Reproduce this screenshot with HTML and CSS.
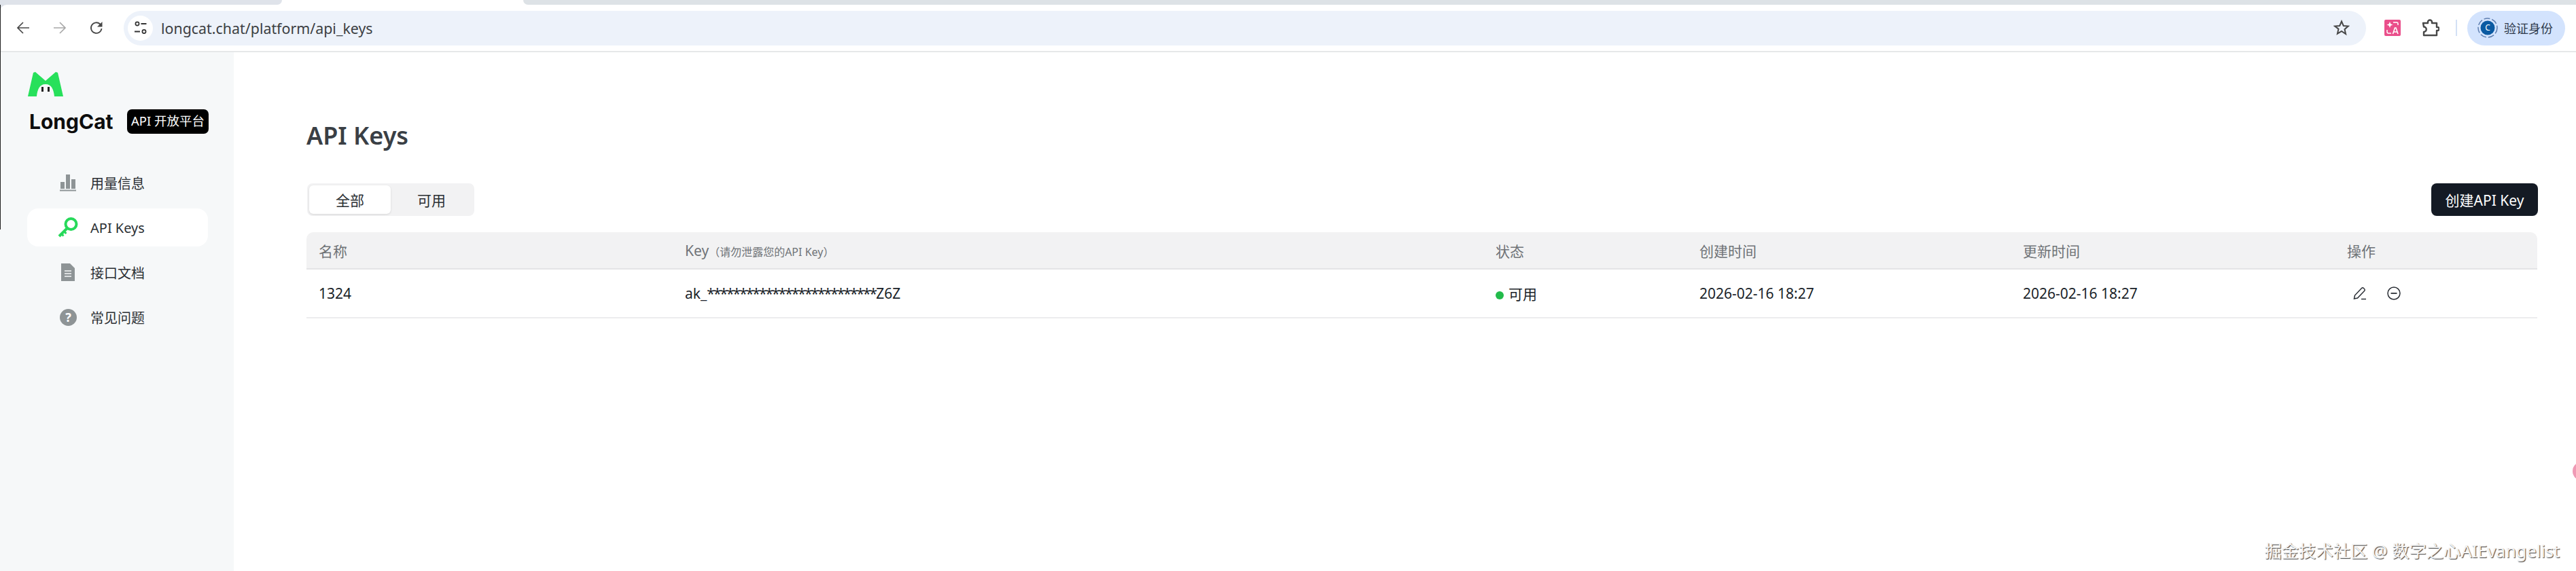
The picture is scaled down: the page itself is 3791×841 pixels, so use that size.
FILE: index.html
```html
<!DOCTYPE html>
<html lang="zh-CN">

<head>
    <meta charset="UTF-8">
    <title>API Keys</title>
    <link rel="stylesheet" href="styles.css">
</head>

<body>
    <div class="chrome">
        <!-- 顶部标签条 -->
        <div class="tabstrip">
            <div class="tab_left"></div>
            <div class="tab_active"></div>
            <div class="tab_right"></div>
        </div>

        <!-- 浏览器工具栏 -->
        <header class="toolbar">
            <div class="nav_btns">
                <svg class="nav_icon" viewBox="0 0 20 20"><path d="M19 10H2M10 2l-8 8 8 8" fill="none" stroke="#474747" stroke-width="1.7"/></svg>
                <svg class="nav_icon" viewBox="0 0 20 20"><path d="M1 10h17M10 2l8 8-8 8" fill="none" stroke="#a8a8a8" stroke-width="1.7"/></svg>
                <svg class="nav_icon" viewBox="0 0 20 20"><path d="M17.500 11a7.800 7.800 0 1 1-2.300-6.500L17.500 7" fill="none" stroke="#474747" stroke-width="1.800"/><path d="M18.500 1v7.500H11z" fill="#474747"/></svg>
            </div>
            <div class="omnibox">
                <span class="site_btn">
                    <svg width="20" height="20" viewBox="0 0 20 20"><circle cx="5" cy="4" r="2.600" fill="none" stroke="#333" stroke-width="1.700"/><path d="M10.500 4h8M1 15.500h8" stroke="#333" stroke-width="2"/><circle cx="15" cy="15.500" r="2.600" fill="none" stroke="#333" stroke-width="1.700"/></svg>
                </span>
                <span class="url">longcat.chat/platform/api_keys</span>
                <svg class="star" viewBox="0 0 24 24"><path d="M12 2.500l2.800 6.500 7 .6-5.300 4.600 1.600 6.900L12 17l-6.100 3.600 1.600-6.900L2.200 9.600l7-.6z" fill="none" stroke="#474747" stroke-width="2"/></svg>
            </div>
            <span class="ext_translate">
                <svg width="24" height="24" viewBox="0 0 24 24"><rect width="24" height="24" rx="2" fill="#ea4f8b"/><path d="M8 3l1.300 3.200L12.500 7.500 9.300 8.800 8 12 6.700 8.800 3.500 7.500l3.200-1.300z" fill="#fff"/><path d="M13 4h5a2 2 0 0 1 2 2v2M4 15v3a2 2 0 0 0 2 2h4" fill="none" stroke="#fff" stroke-width="1.500"/><path d="M12.500 21l3-9h1.500l3 9M13.800 18h5" fill="none" stroke="#fff" stroke-width="1.600"/></svg>
            </span>
            <svg class="ext_puzzle" viewBox="0 0 26 26"><path d="M2 6h7V4.500a3 3 0 0 1 6 0V6h7v6h1a2.500 2.500 0 0 1 0 5h-1v7H3v-5a3.500 3.500 0 0 0 0-7.500z" fill="none" stroke="#474747" stroke-width="2.400" stroke-linejoin="round"/></svg>
            <span class="divider"></span>
            <div class="profile">
                <span class="avatar">
                    <svg width="30" height="30" viewBox="0 0 30 30"><circle cx="15" cy="15" r="14" fill="none" stroke="#5f7fb0" stroke-width="1.500" stroke-dasharray="9 3"/><circle cx="15" cy="15" r="10.500" fill="#0b5aa2"/><text x="15" y="19" class="avatar_text">C</text></svg>
                </span>
                <span class="profile_text">验证身份</span>
            </div>
        </header>
    </div>

    <div class="app">
        <!-- 左侧导航栏 -->
        <aside class="sidebar">
            <svg class="logo" viewBox="0 0 52 36">
                <path d="M8 1l3-1 15 13L41 0l3 1 8 35H39c-1-10-4-18-13-18s-12 8-13 18H0z" fill="#27e05b"/>
                <path d="M20 22h3v7h-3zM29 22h3v7h-3z" fill="#222"/>
            </svg>
            <div class="brand">
                <span class="brand_name">LongCat</span>
                <span class="brand_tag">API 开放平台</span>
            </div>
            <ul class="menu">
                <li class="menu_item">
                    <span class="menu_icon">
                        <svg width="24" height="25" viewBox="0 0 24 25"><path d="M1 11h6v10H1zM9 0h6v21H9zM17 7h6v14h-6z" fill="#8e9496"/><path d="M0 23.500h24" stroke="#8e9496" stroke-width="2"/></svg>
                    </span>
                    <span>用量信息</span>
                </li>
                <li class="menu_item menu_item_active">
                    <span class="menu_icon">
                        <svg width="30" height="30" viewBox="0 0 30 30"><circle cx="19.500" cy="10" r="8" fill="none" stroke="#27d95a" stroke-width="4"/><path d="M14 16L2 28" stroke="#27d95a" stroke-width="4"/><path d="M5 24l3.500 3.500M9 20.500l3.500 3.500" stroke="#27d95a" stroke-width="3"/></svg>
                    </span>
                    <span>API Keys</span>
                </li>
                <li class="menu_item">
                    <span class="menu_icon">
                        <svg width="20" height="26" viewBox="0 0 20 26"><path d="M0 0h13l7 7v19H0z" fill="#8e9496"/><path d="M5 11h10M5 15h10M5 19h10" stroke="#f6f8f9" stroke-width="1.500"/></svg>
                    </span>
                    <span>接口文档</span>
                </li>
                <li class="menu_item">
                    <span class="menu_icon">
                        <svg width="25" height="25" viewBox="0 0 25 25"><circle cx="12.500" cy="12.500" r="12.500" fill="#8e9496"/><text x="12.500" y="19" class="help_text">?</text></svg>
                    </span>
                    <span>常见问题</span>
                </li>
            </ul>
        </aside>

        <!-- 右侧内容显示区域 -->
        <main class="content">
            <h1 class="title">API Keys</h1>
            <div class="filter_row">
                <div class="segment">
                    <span class="segment_item segment_item_active">全部</span>
                    <span class="segment_item">可用</span>
                </div>
                <button class="create_btn">创建API Key</button>
            </div>
            <table class="key_table">
                <thead>
                    <tr>
                        <th class="col_name">名称</th>
                        <th class="col_key">Key<small>（请勿泄露您的API Key）</small></th>
                        <th class="col_status">状态</th>
                        <th class="col_created">创建时间</th>
                        <th class="col_updated">更新时间</th>
                        <th>操作</th>
                    </tr>
                </thead>
                <tbody>
                    <tr>
                        <td>1324</td>
                        <td>ak_<span class="key_stars">**************************</span>Z6Z</td>
                        <td><span class="dot"></span>可用</td>
                        <td>2026-02-16 18:27</td>
                        <td>2026-02-16 18:27</td>
                        <td>
                            <div class="actions">
                                <svg class="action_icon" viewBox="0 0 20 20"><path d="M1.500 18l1-5L12.500 2.500a2 2 0 0 1 3 0l1 1a2 2 0 0 1 0 3L6.500 17z" fill="none" stroke="#2b2f36" stroke-width="1.500"/><path d="M12 18.500h7" stroke="#2b2f36" stroke-width="1.500"/></svg>
                                <svg class="action_icon" viewBox="0 0 20 20"><circle cx="10" cy="10" r="9" fill="none" stroke="#2b2f36" stroke-width="1.500"/><path d="M5.500 10h9" stroke="#2b2f36" stroke-width="1.800"/></svg>
                            </div>
                        </td>
                    </tr>
                </tbody>
            </table>
        </main>
    </div>

    <span class="edge_line"></span>
    <span class="edge_bubble"></span>
    <div class="watermark">掘金技术社区 @ 数字之心AIEvangelist</div>
</body>

</html>
```
FILE: styles.css
```css
* {
    padding: 0;
    margin: 0;
    box-sizing: border-box;
}

html,
body {
    height: 100%;
    overflow: hidden;
}

body {
    background-color: #ffffff;
    font-family: "Noto Sans", "Noto Sans CJK SC", sans-serif;
    color: #1a1f29;
}

.chrome {
    background-color: #dfe3ea;
}

.tabstrip {
    display: flex;
    height: 7px;
    background-color: #ffffff;
}

.tab_left {
    width: 415px;
    background-color: #dfe3ea;
    border-bottom-right-radius: 8px;
}

.tab_active {
    width: 355px;
}

.tab_right {
    flex: 1;
    background-color: #dde2e6;
    border-bottom-left-radius: 8px;
}

.toolbar {
    height: 70px;
    display: flex;
    align-items: center;
    background-color: #ffffff;
    border-bottom: 2px solid #e6e8e9;
    border-top-left-radius: 10px;
    padding: 0 16px 0 24px;
}

.nav_btns {
    display: flex;
    gap: 34px;
    margin-right: 30px;
}

.nav_icon {
    width: 20px;
    height: 20px;
}

.omnibox {
    flex: 1;
    height: 51px;
    border-radius: 26px;
    background-color: #edf2fa;
    display: flex;
    align-items: center;
    padding: 0 24px 0 6px;
}

.site_btn {
    width: 37px;
    height: 37px;
    border-radius: 50%;
    background-color: #ffffff;
    display: flex;
    align-items: center;
    justify-content: center;
    margin-right: 12px;
}

.url {
    flex: 1;
    font-size: 21.4px;
    color: #3c4043;
}

.star {
    width: 24px;
    height: 24px;
}

.ext_translate {
    display: flex;
    margin-left: 27px;
}

.ext_puzzle {
    width: 26px;
    height: 26px;
    margin-left: 31px;
}

.divider {
    width: 2px;
    height: 24px;
    background-color: #d3e0f5;
    margin: 0 15px 0 24px;
}

.profile {
    height: 51px;
    border-radius: 26px;
    background-color: #d3e3fd;
    display: flex;
    align-items: center;
    padding: 0 18px 0 15px;
    gap: 9px;
}

.avatar {
    display: flex;
}

.avatar_text {
    font-size: 12px;
    fill: #ffffff;
    text-anchor: middle;
}

.profile_text {
    font-size: 18px;
    color: #2f3a4c;
}

.app {
    display: flex;
    height: 764px;
}

.sidebar {
    width: 344px;
    background-color: #f6f8f9;
    padding: 29px 0 0 41px;
}

.logo {
    display: block;
    width: 52px;
    height: 36px;
}

.brand {
    display: flex;
    align-items: center;
    margin-top: 19px;
    height: 36px;
}

.brand_name {
    font-family: "Inter", "Noto Sans", sans-serif;
    font-size: 30px;
    font-weight: 700;
    color: #0d0d0d;
    margin-left: 2px;
    width: 144px;
}

.brand_tag {
    height: 36px;
    line-height: 34px;
    padding: 0 6px;
    background-color: #000000;
    color: #ffffff;
    border-radius: 7px;
    font-size: 18.500px;
    white-space: nowrap;
}

.menu {
    list-style: none;
    margin: 44px 0 0 -1px;
    width: 266px;
}

.menu_item {
    height: 56px;
    display: flex;
    align-items: center;
    margin-bottom: 10px;
    padding-left: 45px;
    border-radius: 16px;
    font-size: 20px;
    color: #2b2f33;
}

.menu_item_active {
    background-color: #ffffff;
}

.menu_icon {
    width: 30px;
    margin-right: 18px;
    display: flex;
    justify-content: center;
}

.help_text {
    font-size: 18px;
    font-weight: 700;
    fill: #ffffff;
    text-anchor: middle;
}

.content {
    flex: 1;
    padding: 98px 57px 0 107px;
}

.title {
    font-size: 36px;
    font-weight: 600;
    line-height: 50px;
    color: #3a3f45;
}

.filter_row {
    display: flex;
    align-items: center;
    justify-content: space-between;
    margin-top: 45px;
}

.segment {
    display: flex;
    height: 48px;
    padding: 3px;
    margin-left: 1px;
    border-radius: 8px;
    background-color: #f2f2f3;
}

.segment_item {
    width: 120px;
    display: flex;
    align-items: center;
    justify-content: center;
    font-size: 21px;
    color: #2b2f33;
    border-radius: 6px;
}

.segment_item_active {
    background-color: #ffffff;
    box-shadow: 0 1px 3px rgba(0, 0, 0, 0.12);
}

.create_btn {
    width: 157px;
    height: 48px;
    margin-right: -1px;
    border: none;
    border-radius: 8px;
    background-color: #141a24;
    color: #ffffff;
    font-family: inherit;
    font-size: 21px;
}

.key_table {
    width: 100%;
    margin-top: 24px;
    border-collapse: separate;
    border-spacing: 0;
    table-layout: fixed;
}

.key_table th {
    height: 55px;
    padding-left: 18px;
    text-align: left;
    font-size: 21px;
    font-weight: 400;
    color: #6f7377;
    background-color: #f2f2f3;
    border-bottom: 2px solid #e4e4e6;
}

.key_table th:first-child {
    border-top-left-radius: 10px;
}

.key_table th:last-child {
    border-top-right-radius: 10px;
}

.key_table th small {
    font-size: 16px;
}

.key_table td {
    height: 72px;
    padding-left: 18px;
    font-size: 21px;
    color: #1a1f29;
    border-bottom: 2px solid #ececee;
}

.key_stars {
    letter-spacing: -2px;
}

.col_name {
    width: 539px;
}

.col_key {
    width: 1193px;
}

.col_status {
    width: 300px;
}

.col_created {
    width: 476px;
}

.col_updated {
    width: 477px;
}

.dot {
    display: inline-block;
    width: 12px;
    height: 12px;
    border-radius: 50%;
    background-color: #22bb4b;
    margin-right: 7px;
    vertical-align: 0;
}

.actions {
    display: flex;
    gap: 30px;
    padding-left: 9px;
}

.action_icon {
    width: 20px;
    height: 20px;
}

.edge_line {
    position: absolute;
    left: 0;
    top: 7px;
    width: 1px;
    height: 331px;
    background-color: #222222;
}

.edge_bubble {
    position: absolute;
    left: 3786px;
    top: 680px;
    width: 28px;
    height: 28px;
    border-radius: 50%;
    background-color: #ef9ab5;
}

.watermark {
    position: absolute;
    right: 24px;
    bottom: 13px;
    font-size: 25.300px;
    color: #f4f4f4;
    text-shadow: 1px 1px 1px #444444;
    white-space: nowrap;
}
```
